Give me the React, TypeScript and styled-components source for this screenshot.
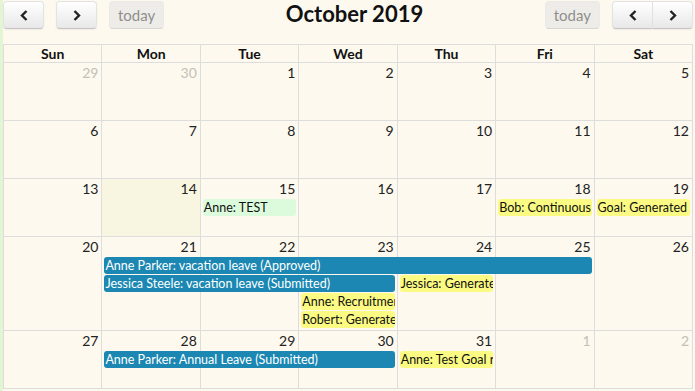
import React from 'react';
import styled, { createGlobalStyle, css } from 'styled-components';

const COLORS = {
  page: '#fdf9ef',
  strip: '#e2f6d4',
  border: '#dddddd',
  today: '#f8f6e0',
  text: '#222222',
  muted: '#c4bfb8',
  blue: '#1b87b2',
  yellow: '#fbfb84',
  green: '#dcfbdc',
};

type Tone = 'blue' | 'yellow' | 'green';

type CalEvent = {
  key: string
  title: string
  col: number
  span: number
  row: number
  tone: Tone
};

type Day = {
  n: number
  other?: boolean
  today?: boolean
};

type Week = {
  days: Day[]
  events: CalEvent[]
};

const range = (from: number, to: number, other = false): Day[] => {
  const out: Day[] = [];
  for(let n = from; n <= to; n++) out.push({ n, other });
  return out;
};

const WEEKS: Week[] = [
  { days: [ ...range(29, 30, true), ...range(1, 5) ], events: [] },
  { days: range(6, 12), events: [] },
  {
    days: range(13, 19).map(d => d.n === 14 ? { ...d, today: true } : d),
    events: [
      { key: 'e1', title: 'Anne: TEST', col: 2, span: 1, row: 0, tone: 'green' },
      { key: 'e2', title: 'Bob: Continuous feedback', col: 5, span: 1, row: 0, tone: 'yellow' },
      { key: 'e3', title: 'Goal: Generated', col: 6, span: 1, row: 0, tone: 'yellow' },
    ]
  },
  {
    days: range(20, 26),
    events: [
      { key: 'e4', title: 'Anne Parker: vacation leave (Approved)', col: 1, span: 5, row: 0, tone: 'blue' },
      { key: 'e5', title: 'Jessica Steele: vacation leave (Submitted)', col: 1, span: 3, row: 1, tone: 'blue' },
      { key: 'e6', title: 'Jessica: Generated goal', col: 4, span: 1, row: 1, tone: 'yellow' },
      { key: 'e7', title: 'Anne: Recruitment review', col: 3, span: 1, row: 2, tone: 'yellow' },
      { key: 'e8', title: 'Robert: Generated goal', col: 3, span: 1, row: 3, tone: 'yellow' },
    ]
  },
  {
    days: [ ...range(27, 31), ...range(1, 2, true) ],
    events: [
      { key: 'e9', title: 'Anne Parker: Annual Leave (Submitted)', col: 1, span: 3, row: 0, tone: 'blue' },
      { key: 'e10', title: 'Anne: Test Goal reminder', col: 4, span: 1, row: 0, tone: 'yellow' },
    ]
  },
];

const DAY_NAMES = [ 'Sun', 'Mon', 'Tue', 'Wed', 'Thu', 'Fri', 'Sat' ];

function Chevron({ dir }: { dir: 'left' | 'right' }) {
  const points = dir === 'left' ? '6.5,1 2,5.5 6.5,10' : '1.5,1 6,5.5 1.5,10';
  return (
    <svg width="8" height="11" viewBox="0 0 8 11">
      <polyline points={ points } fill="none" stroke="#222" strokeWidth="2.4" />
    </svg>
  );
}

export default function App() {
  const header = DAY_NAMES.map(name => (
    <HeadCell key={ name }>{ name }</HeadCell>
  ));

  const weeks = WEEKS.map((week, w) => {
    const rows = week.events.reduce((m, e) => Math.max(m, e.row + 1), 0);
    const cells = week.days.map((day, i) => (
      <DayCell key={ `bg-${ w }-${ i }` } col={ i + 1 } isToday={ !!day.today } />
    ));
    const numbers = week.days.map((day, i) => (
      <DayNumber key={ `num-${ w }-${ i }` } col={ i + 1 } other={ !!day.other }>
        { day.n }
      </DayNumber>
    ));
    const events = week.events.map(e => (
      <EventBar key={ e.key } col={ e.col + 1 } span={ e.span } row={ e.row + 2 } tone={ e.tone }>
        { e.title }
      </EventBar>
    ));
    return (
      <WeekRow key={ `week-${ w }` } rows={ rows }>
        { cells }
        { numbers }
        { events }
      </WeekRow>
    );
  });

  return (
    <>
      <GlobalStyle />
      <Page>
        <Calendar>
          <Toolbar>
            <Group>
              <Button><Chevron dir="left" /></Button>
              <Button><Chevron dir="right" /></Button>
              <Button disabled>today</Button>
            </Group>
            <Title>October 2019</Title>
            <Group>
              <Button disabled>today</Button>
              <ButtonPair>
                <Button><Chevron dir="left" /></Button>
                <Button><Chevron dir="right" /></Button>
              </ButtonPair>
            </Group>
          </Toolbar>
          <HeadRow>{ header }</HeadRow>
          { weeks }
        </Calendar>
      </Page>
    </>
  );
}

const GlobalStyle = createGlobalStyle`
  html, body {
    margin: 0;
    padding: 0;
    background: ${ COLORS.page };
  }
  body {
    font-family: Lato, "Open Sans", sans-serif;
    color: ${ COLORS.text };
  }
  * { box-sizing: border-box; }
`;

const Page = styled.div`
  width: 695px;
  height: 391px;
  overflow: hidden;
  border-left: 3px solid ${ COLORS.strip };
  padding-right: 2px;
  background: ${ COLORS.page };
`;

const Calendar = styled.div`
  display: flex;
  flex-direction: column;
`;

const Toolbar = styled.div`
  display: flex;
  align-items: flex-start;
  padding-top: 1px;
  margin-bottom: 15px;
`;

const Group = styled.div`
  display: flex;
  gap: 12px;
`;

const Title = styled.h2`
  flex: 1;
  margin: 0;
  padding-top: 0;
  text-align: center;
  font-size: 22px;
  font-weight: 700;
  line-height: 26px;
  color: #111;
`;

const Button = styled.button`
  display: flex;
  align-items: center;
  justify-content: center;
  height: 28px;
  min-width: 41px;
  padding: 0 8px;
  font-family: Lato, sans-serif;
  font-size: 15px;
  color: #333;
  border: 1px solid;
  border-color: #e3e3e3 #e3e3e3 #c4c4c4;
  border-radius: 4px;
  background: linear-gradient(#ffffff, #e8e8e8);
  box-shadow: inset 0 1px 0 rgba(255, 255, 255, 0.2), 0 1px 2px rgba(0, 0, 0, 0.05);

  &:disabled {
    background: #e6e6e6;
    color: #555;
    opacity: 0.65;
    box-shadow: none;
    min-width: 55px;
  }
`;

const ButtonPair = styled.div`
  display: flex;

  ${ Button }:first-child {
    border-top-right-radius: 0;
    border-bottom-right-radius: 0;
  }
  ${ Button }:last-child {
    border-top-left-radius: 0;
    border-bottom-left-radius: 0;
    border-left: none;
    min-width: 40px;
  }
`;

const columns = css`
  display: grid;
  grid-template-columns: repeat(7, 1fr);
  border-left: 1px solid ${ COLORS.border };
  border-bottom: 1px solid ${ COLORS.border };
`;

const HeadRow = styled.div`
  ${ columns }
  border-top: 1px solid ${ COLORS.border };
`;

const HeadCell = styled.div`
  height: 17px;
  line-height: 17px;
  text-align: center;
  font-size: 14px;
  font-weight: 700;
  color: #111;
  border-right: 1px solid ${ COLORS.border };
`;

const WeekRow = styled.div<{ rows: number }>`
  ${ columns }
  grid-template-rows: 20px ${ ({ rows }) => rows ? `repeat(${ rows }, 18px)` : '' } 1fr;
  min-height: 58px;
  padding-bottom: 1px;
`;

const DayCell = styled.div<{ col: number, isToday: boolean }>`
  grid-column: ${ ({ col }) => col };
  grid-row: 1 / -1;
  margin-bottom: -1px;
  border-right: 1px solid ${ COLORS.border };
  background: ${ ({ isToday }) => isToday ? COLORS.today : 'transparent' };
`;

const DayNumber = styled.div<{ col: number, other: boolean }>`
  grid-column: ${ ({ col }) => col };
  grid-row: 1;
  padding: 1px 4px 0 0;
  text-align: right;
  font-size: 14px;
  line-height: 17px;
  color: ${ ({ other }) => other ? COLORS.muted : COLORS.text };
`;

const TONES: Record<Tone, { bg: string, fg: string }> = {
  blue: { bg: COLORS.blue, fg: '#ffffff' },
  yellow: { bg: COLORS.yellow, fg: '#111111' },
  green: { bg: COLORS.green, fg: '#111111' },
};

const EventBar = styled.div<{ col: number, span: number, row: number, tone: Tone }>`
  grid-column: ${ ({ col, span }) => `${ col } / span ${ span }` };
  grid-row: ${ ({ row }) => row };
  height: 17px;
  margin: 0 3px 0 2px;
  padding: 0 1px;
  border-radius: 3px;
  font-size: 12.5px;
  line-height: 17px;
  white-space: nowrap;
  overflow: hidden;
  background: ${ ({ tone }) => TONES[tone].bg };
  color: ${ ({ tone }) => TONES[tone].fg };
`;
